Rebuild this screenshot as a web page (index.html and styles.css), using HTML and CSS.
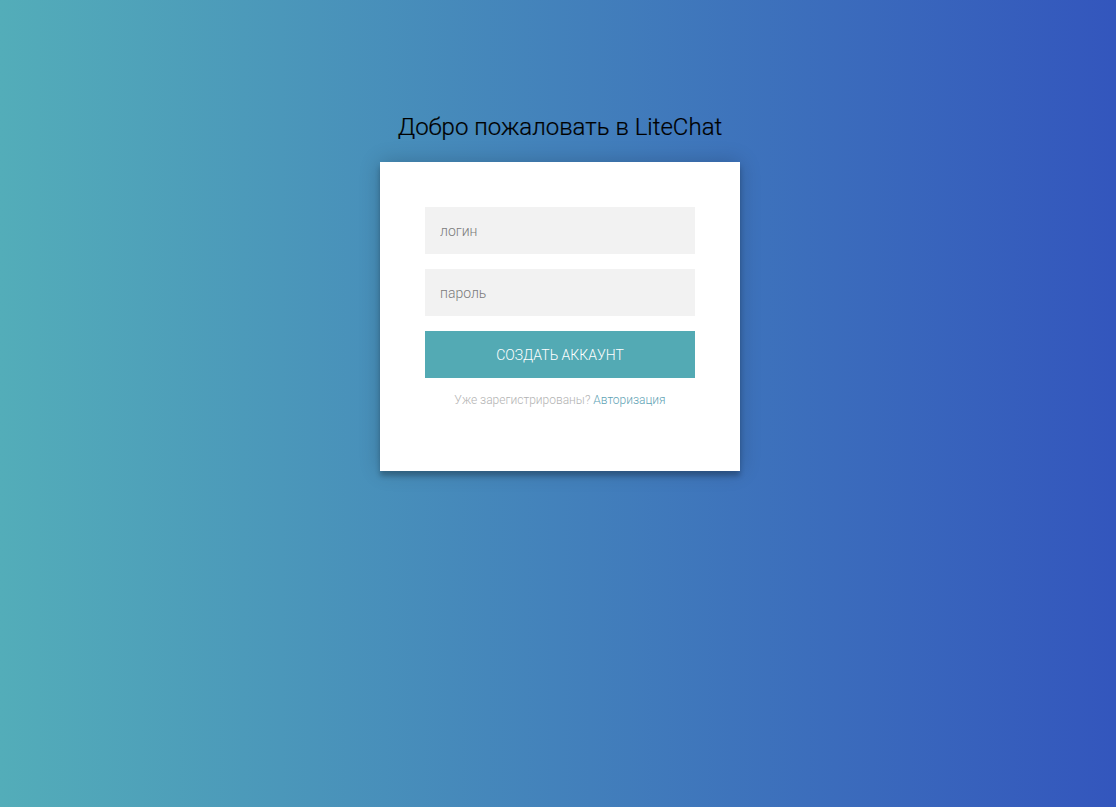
FILE: index.html
```html
<!DOCTYPE html>
<html lang="ru">
<head>
<meta charset="utf-8">
<title>LiteChat</title>
<link rel="stylesheet" href="styles.css">
</head>
<body>
<main class="page">
  <h1 class="title">Добро пожаловать в LiteChat</h1>
  <form class="form">
    <input class="field" type="text" placeholder="логин">
    <input class="field" type="password" placeholder="пароль">
    <button class="btn" type="button">создать аккаунт</button>
    <p class="message">Уже зарегистрированы? <a class="link" href="#">Авторизация</a></p>
  </form>
</main>
</body>
</html>
```

FILE: styles.css
```css
html, body {
  margin: 0;
  height: 100%;
}
body {
  font-family: Roboto, "Liberation Sans", sans-serif;
  background: linear-gradient(to right, #53adb9, #3356bd);
}
.page {
  display: flex;
  flex-direction: column;
  align-items: center;
  padding: 112px 0 0 4px;
}
.title {
  margin: 0 0 19px;
  font-size: 24px;
  font-weight: 300;
  line-height: 31px;
  color: #000;
  -webkit-text-stroke: 0.2px #000;
}
.form {
  box-sizing: border-box;
  width: 360px;
  height: 309px;
  background: #fff;
  padding: 45px;
  margin: 0;
  text-align: center;
  box-shadow: 0 0 20px 0 rgba(0,0,0,0.2), 0 5px 5px 0 rgba(0,0,0,0.24);
}
.field {
  display: block;
  box-sizing: border-box;
  width: 100%;
  height: 47px;
  margin: 0 0 15px;
  padding: 15px;
  border: 0;
  outline: 0;
  background: #f2f2f2;
  font-family: Roboto, "Liberation Sans", sans-serif;
  font-size: 14px;
  font-weight: 300;
  color: #333;
}
.field::placeholder {
  color: #7b7b7b;
}
.btn {
  display: block;
  box-sizing: border-box;
  width: 100%;
  height: 47px;
  border: 0;
  padding: 15px;
  background: #53aab4;
  color: #fff;
  font-family: Roboto, "Liberation Sans", sans-serif;
  font-size: 14px;
  font-weight: 300;
  text-transform: uppercase;
}
.message {
  margin: 15px 0 0;
  font-size: 12px;
  font-weight: 300;
  line-height: 14px;
  color: #b3b3b3;
}
.link {
  color: #5fa3b5;
  text-decoration: none;
}
```
